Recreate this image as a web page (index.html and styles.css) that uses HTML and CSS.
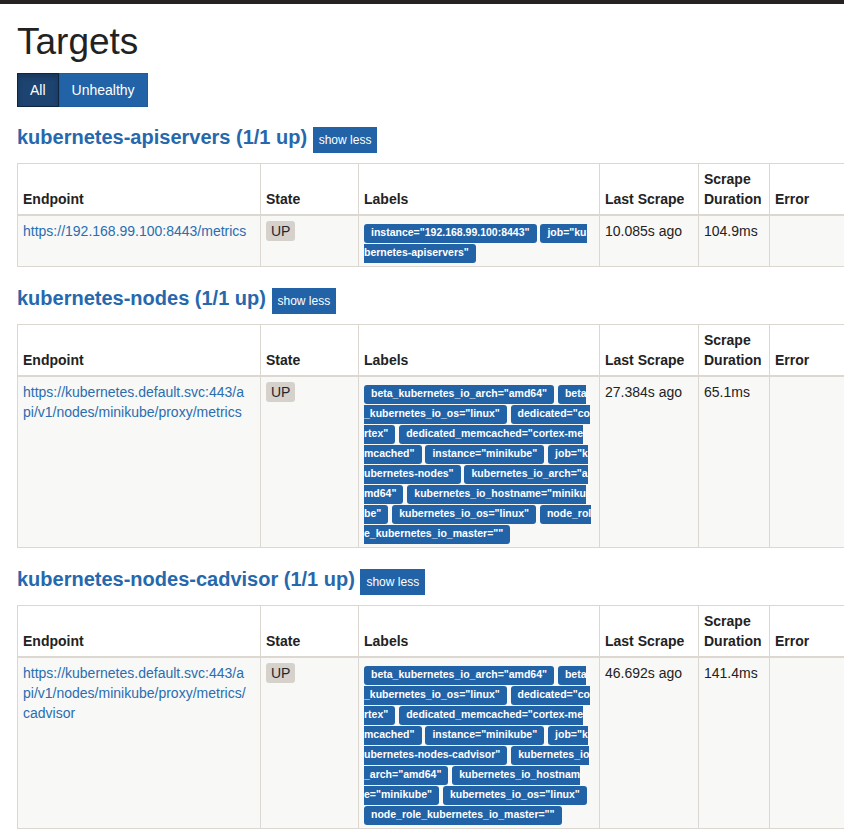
FILE: index.html
```html
<!DOCTYPE html>
<html lang="en">
<head>
<meta charset="utf-8">
<title>Targets</title>
<link rel="stylesheet" href="styles.css">
</head>
<body>
<div class="topbar"></div>
<div class="container">
  <h1 class="title">Targets</h1>
  <div class="filter">
    <button class="filter-btn active">All</button><button class="filter-btn">Unhealthy</button>
  </div>

  <h2 class="job-title"><a href="#job-kubernetes-apiservers">kubernetes-apiservers (1/1 up)</a> <button class="toggle">show less</button></h2>
  <table class="targets">
    <colgroup><col class="c-endpoint"><col class="c-state"><col class="c-labels"><col class="c-last"><col class="c-dur"><col class="c-error"></colgroup>
    <thead>
      <tr><th>Endpoint</th><th>State</th><th>Labels</th><th>Last Scrape</th><th>Scrape Duration</th><th>Error</th></tr>
    </thead>
    <tbody>
      <tr>
        <td class="endpoint"><a href="#">https://192.168.99.100:8443/metrics</a></td>
        <td><span class="state">UP</span></td>
        <td class="labels"><span class="label">instance="192.168.99.100:8443"</span> <span class="label">job="ku<br>bernetes-apiservers"</span></td>
        <td>10.085s ago</td>
        <td>104.9ms</td>
        <td></td>
      </tr>
    </tbody>
  </table>

  <h2 class="job-title"><a href="#job-kubernetes-nodes">kubernetes-nodes (1/1 up)</a> <button class="toggle">show less</button></h2>
  <table class="targets">
    <colgroup><col class="c-endpoint"><col class="c-state"><col class="c-labels"><col class="c-last"><col class="c-dur"><col class="c-error"></colgroup>
    <thead>
      <tr><th>Endpoint</th><th>State</th><th>Labels</th><th>Last Scrape</th><th>Scrape Duration</th><th>Error</th></tr>
    </thead>
    <tbody>
      <tr>
        <td class="endpoint"><a href="#">https://kubernetes.default.svc:443/api/v1/nodes/minikube/proxy/metrics</a></td>
        <td><span class="state">UP</span></td>
        <td class="labels"><span class="label">beta_kubernetes_io_arch="amd64"</span> <span class="label">beta<br>_kubernetes_io_os="linux"</span> <span class="label">dedicated="co<br>rtex"</span> <span class="label">dedicated_memcached="cortex-me<br>mcached"</span> <span class="label">instance="minikube"</span> <span class="label">job="k<br>ubernetes-nodes"</span> <span class="label">kubernetes_io_arch="a<br>md64"</span> <span class="label">kubernetes_io_hostname="miniku<br>be"</span> <span class="label">kubernetes_io_os="linux"</span> <span class="label">node_rol<br>e_kubernetes_io_master=""</span></td>
        <td>27.384s ago</td>
        <td>65.1ms</td>
        <td></td>
      </tr>
    </tbody>
  </table>

  <h2 class="job-title"><a href="#job-kubernetes-nodes-cadvisor">kubernetes-nodes-cadvisor (1/1 up)</a> <button class="toggle">show less</button></h2>
  <table class="targets">
    <colgroup><col class="c-endpoint"><col class="c-state"><col class="c-labels"><col class="c-last"><col class="c-dur"><col class="c-error"></colgroup>
    <thead>
      <tr><th>Endpoint</th><th>State</th><th>Labels</th><th>Last Scrape</th><th>Scrape Duration</th><th>Error</th></tr>
    </thead>
    <tbody>
      <tr>
        <td class="endpoint"><a href="#">https://kubernetes.default.svc:443/api/v1/nodes/minikube/proxy/metrics/cadvisor</a></td>
        <td><span class="state">UP</span></td>
        <td class="labels"><span class="label">beta_kubernetes_io_arch="amd64"</span> <span class="label">beta<br>_kubernetes_io_os="linux"</span> <span class="label">dedicated="co<br>rtex"</span> <span class="label">dedicated_memcached="cortex-me<br>mcached"</span> <span class="label">instance="minikube"</span> <span class="label">job="k<br>ubernetes-nodes-cadvisor"</span> <span class="label">kubernetes_io<br>_arch="amd64"</span> <span class="label">kubernetes_io_hostnam<br>e="minikube"</span> <span class="label">kubernetes_io_os="linux"</span><br><span class="label">node_role_kubernetes_io_master=""</span></td>
        <td>46.692s ago</td>
        <td>141.4ms</td>
        <td></td>
      </tr>
    </tbody>
  </table>
</div>
</body>
</html>
```

FILE: styles.css
```css
html, body {
  margin: 0;
  overflow: hidden;
  background: #ffffff;
}

body {
  font-family: "Liberation Sans", Arial, Helvetica, sans-serif;
  font-size: 14px;
  line-height: 20px;
  color: #222222;
}

.topbar {
  height: 4px;
  background: #262224;
}

.container {
  padding-left: 17px;
}

.title {
  font-size: 37px;
  font-weight: 500;
  line-height: 40px;
  margin: 18px 0 11px;
  color: #222222;
}

.filter {
  display: flex;
}

.filter-btn {
  font-family: inherit;
  font-size: 14px;
  line-height: 20px;
  padding: 6px 12px;
  margin: 0;
  border: 1px solid #1f5c9c;
  background: #2263a8;
  color: #ffffff;
  border-radius: 0;
}

.filter-btn.active {
  background: #1d4370;
  border-color: #10263f;
  box-shadow: inset 0 3px 5px rgba(0, 0, 0, 0.2);
}

.job-title {
  font-size: 20px;
  font-weight: 700;
  line-height: 22px;
  margin: 19px 0 10px;
}

.job-title a {
  color: #2668ad;
  text-decoration: none;
}

.toggle {
  font-family: inherit;
  font-size: 12px;
  font-weight: 400;
  line-height: 18px;
  padding: 3px 5px;
  margin: 0;
  border: 1px solid #2263a8;
  background: #2263a8;
  color: #ffffff;
  border-radius: 0;
  vertical-align: baseline;
}

.targets {
  border-collapse: collapse;
  table-layout: fixed;
  width: 952px;
  margin-bottom: 20px;
}

.c-endpoint { width: 243px; }
.c-state { width: 98px; }
.c-labels { width: 241px; }
.c-last { width: 99px; }
.c-dur { width: 71px; }
.c-error { width: 400px; }

.targets th,
.targets td {
  border: 1px solid #dcd7d0;
  padding: 5px;
  text-align: left;
}

.targets th {
  vertical-align: bottom;
  border-bottom-width: 2px;
  font-weight: 700;
  color: #222222;
}

.targets td {
  vertical-align: top;
}

.targets tbody tr {
  background: #f8f8f7;
}

.targets .endpoint {
  word-break: break-all;
  padding-right: 11px;
}

.endpoint a {
  color: #2a6db0;
  text-decoration: none;
}

.state {
  background: #d6d1ca;
  color: #1d2733;
  padding: 2px 5px;
  border-radius: 3px;
}

.targets .labels {
  white-space: nowrap;
  overflow: hidden;
}

.label {
  background: #2263a8;
  color: #ffffff;
  font-size: 10.5px;
  font-weight: 700;
  line-height: 1;
  padding: 2px 7px 5px;
  border-radius: 3px;
}
```
